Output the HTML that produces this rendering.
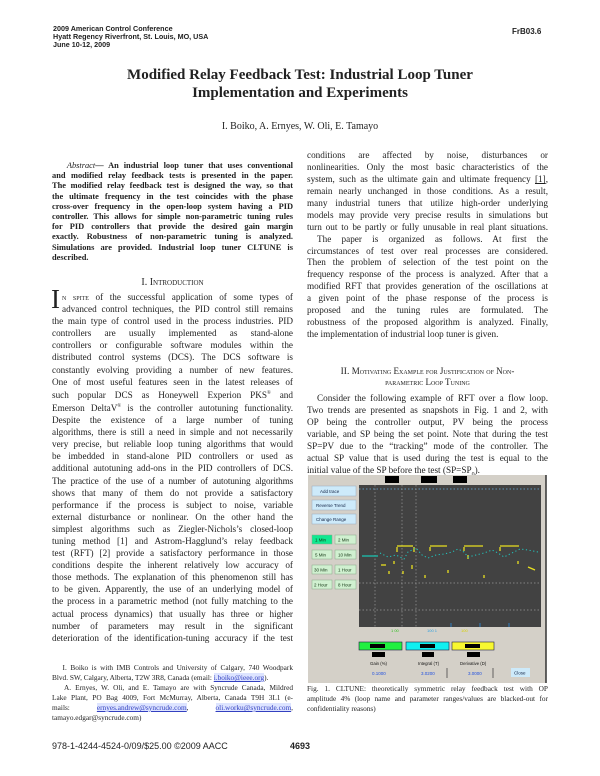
<!DOCTYPE html>
<html><head><meta charset="utf-8"><style>
*{margin:0;padding:0;box-sizing:border-box}
body{width:600px;height:776px;background:#fff;position:relative;overflow:hidden;font-family:"Liberation Serif",serif;color:#222}
.abs{position:absolute}
.hd{font-family:"Liberation Sans",sans-serif;font-weight:bold;font-size:7.2px;line-height:8px;color:#222}
.col{position:absolute;font-size:9.2px}
.col div{white-space:nowrap;text-align:justify;text-align-last:justify;overflow:visible}
.col div.l{text-align-last:left}
.ab{font-weight:bold;font-size:8.4px}
.fn{font-size:7.3px}
.lnk{color:#3340c0;text-decoration:underline;background:#dde4ff}
.sc{font-variant:small-caps}
</style></head><body>
<div class="abs hd" style="left:53px;top:25px">2009 American Control Conference<br>Hyatt Regency Riverfront, St. Louis, MO, USA<br>June 10-12, 2009</div>
<div class="abs hd" style="left:512px;top:28px;font-size:8px">FrB03.6</div>
<div class="abs" style="left:0;width:600px;top:66px;text-align:center;font-weight:bold;font-size:15px;line-height:18px;color:#222">Modified Relay Feedback Test: Industrial Loop Tuner<br>Implementation and Experiments</div>
<div class="abs" style="left:0;width:600px;top:121px;text-align:center;font-size:10px">I. Boiko, A. Ernyes, W. Oli, E. Tamayo</div>

<div class="col ab" style="left:52px;top:161px;width:241px;line-height:10.2px">
<div>&nbsp;&nbsp;&nbsp;<i style="font-weight:normal">Abstract</i>— An industrial loop tuner that uses conventional</div>
<div>and modified relay feedback tests is presented in the paper.</div>
<div>The modified relay feedback test is designed the way, so that</div>
<div>the ultimate frequency in the test coincides with the phase</div>
<div>cross-over frequency in the open-loop system having a PID</div>
<div>controller. This allows for simple non-parametric tuning rules</div>
<div>for PID controllers that provide the desired gain margin</div>
<div>exactly. Robustness of non-parametric tuning is analyzed.</div>
<div>Simulations are provided. Industrial loop tuner CLTUNE is</div>
<div class="l">described.</div>
</div>

<div class="abs" style="left:52px;width:241px;top:277px;text-align:center;font-size:10px">I. <span class="sc">Introduction</span></div>
<div class="abs" style="left:51px;top:284px;font-size:27px;line-height:30px">I</div>
<div class="col" style="left:52px;top:291px;width:241px;line-height:12.1px">
<div style="padding-left:10px"><span class="sc">n spite</span> of the successful application of some types of</div>
<div style="padding-left:10px">advanced control techniques, the PID control still remains</div>
<div>the main type of control used in the process industries. PID</div>
<div>controllers are usually implemented as stand-alone</div>
<div>controllers or configurable software modules within the</div>
<div>distributed control systems (DCS). The DCS software is</div>
<div>constantly evolving providing a number of new features.</div>
<div>One of most useful features seen in the latest releases of</div>
<div>such popular DCS as Honeywell Experion PKS<sup style="font-size:5px">®</sup> and</div>
<div>Emerson DeltaV<sup style="font-size:5px">®</sup> is the controller autotuning functionality.</div>
<div>Despite the existence of a large number of tuning</div>
<div>algorithms, there is still a need in simple and not necessarily</div>
<div>very precise, but reliable loop tuning algorithms that would</div>
<div>be imbedded in stand-alone PID controllers or used as</div>
<div>additional autotuning add-ons in the PID controllers of DCS.</div>
<div style="letter-spacing:-0.15px">The practice of the use of a number of autotuning algorithms</div>
<div>shows that many of them do not provide a satisfactory</div>
<div>performance if the process is subject to noise, variable</div>
<div>external disturbance or nonlinear. On the other hand the</div>
<div>simplest algorithms such as Ziegler-Nichols’s closed-loop</div>
<div>tuning method [1] and Astrom-Hagglund’s relay feedback</div>
<div>test (RFT) [2] provide a satisfactory performance in those</div>
<div>conditions despite the inherent relatively low accuracy of</div>
<div>those methods. The explanation of this phenomenon still has</div>
<div>to be given. Apparently, the use of an underlying model of</div>
<div>the process in a parametric method (not fully matching to the</div>
<div>actual process dynamics) that usually has three or higher</div>
<div>number of parameters may result in the significant</div>
<div>deterioration of the identification-tuning accuracy if the test</div>
</div>

<div class="col fn" style="left:52px;top:663px;width:241px;line-height:10px">
<div>&nbsp;&nbsp;&nbsp;I. Boiko is with IMB Controls and University of Calgary, 740 Woodpark</div>
<div class="l">Blvd. SW, Calgary, Alberta, T2W 3R8, Canada (email: <span class="lnk">i.boiko@ieee.org</span>).</div>
<div>&nbsp;&nbsp;&nbsp;A. Ernyes, W. Oli, and E. Tamayo are with Syncrude Canada, Mildred</div>
<div>Lake Plant, PO Bag 4009, Fort McMurray, Alberta, Canada T9H 3L1 (e-</div>
<div>mails: <span class="lnk">ernyes.andrew@syncrude.com</span>, <span class="lnk">oli.worku@syncrude.com</span>,</div>
<div class="l">tamayo.edgar@syncrude.com)</div>
</div>

<div class="col" style="left:307px;top:150px;width:241px;line-height:11.93px">
<div>conditions are affected by noise, disturbances or</div>
<div>nonlinearities. Only the most basic characteristics of the</div>
<div>system, such as the ultimate gain and ultimate frequency <span style="text-decoration:underline">[1]</span>,</div>
<div>remain nearly unchanged in those conditions. As a result,</div>
<div>many industrial tuners that utilize high-order underlying</div>
<div>models may provide very precise results in simulations but</div>
<div>turn out to be partly or fully unusable in real plant situations.</div>
<div style="padding-left:10px">The paper is organized as follows. At first the</div>
<div>circumstances of test over real processes are considered.</div>
<div>Then the problem of selection of the test point on the</div>
<div>frequency response of the process is analyzed. After that a</div>
<div>modified RFT that provides generation of the oscillations at</div>
<div>a given point of the phase response of the process is</div>
<div>proposed and the tuning rules are formulated. The</div>
<div>robustness of the proposed algorithm is analyzed. Finally,</div>
<div class="l">the implementation of industrial loop tuner is given.</div>
</div>

<div class="abs" style="left:307px;width:241px;top:366px;text-align:center;font-size:9.5px;line-height:10px">II. <span class="sc" style="font-size:9px">Motivating Example for Justification of Non-<br>parametric Loop Tuning</span></div>

<div class="col" style="left:307px;top:392px;width:241px;line-height:12.05px">
<div style="padding-left:10px">Consider the following example of RFT over a flow loop.</div>
<div>Two trends are presented as snapshots in Fig. 1 and 2, with</div>
<div>OP being the controller output, PV being the process</div>
<div>variable, and SP being the set point. Note that during the test</div>
<div>SP=PV due to the “tracking” mode of the controller. The</div>
<div>actual SP value that is used during the test is equal to the</div>
<div class="l">initial value of the SP before the test (SP=SP<sub style="font-size:6px">0</sub>).</div>
</div>

<svg class="abs" style="left:308px;top:475px" width="240" height="209" viewBox="0 0 240 209" font-family="Liberation Sans, sans-serif">
<rect x="0" y="0" width="238" height="208" fill="#d4d0c8"/>
<line x1="238" y1="0" x2="238" y2="208" stroke="#333" stroke-width="1.5"/>
<rect x="77" y="1" width="14" height="7" fill="#000"/><rect x="113" y="1" width="16" height="7" fill="#000"/><rect x="145" y="1" width="14" height="7" fill="#000"/>
<g fill="#cdeafa" stroke="#9ab" stroke-width="0.5">
<rect x="4" y="11" width="44" height="10"/><rect x="4" y="25" width="44" height="10"/><rect x="4" y="39" width="44" height="10"/></g>
<g font-size="4.5" fill="#124">
<text x="12" y="18">Add trace</text><text x="8" y="32">Reverse Trend</text><text x="8" y="46">Change Range</text></g>
<g stroke="#8a8" stroke-width="0.5" fill="#d0f0d0">
<rect x="4" y="60" width="20" height="9" fill="#10e890"/><rect x="27" y="60" width="21" height="9"/>
<rect x="4" y="75" width="20" height="9"/><rect x="27" y="75" width="21" height="9"/>
<rect x="4" y="90" width="20" height="9"/><rect x="27" y="90" width="21" height="9"/>
<rect x="4" y="105" width="20" height="9"/><rect x="27" y="105" width="21" height="9"/></g>
<g font-size="4.5" fill="#131">
<text x="7" y="66.5">1 Min</text><text x="30" y="66.5">2 Min</text>
<text x="7" y="81.5">5 Min</text><text x="30" y="81.5">10 Min</text>
<text x="6" y="96.5">30 Min</text><text x="30" y="96.5">1 Hour</text>
<text x="6" y="111.5">2 Hour</text><text x="30" y="111.5">8 Hour</text></g>
<rect x="51" y="10" width="182" height="142" fill="#424242"/>
<line x1="51" y1="14" x2="233" y2="14" stroke="#6ab0e0" stroke-width="0.8" stroke-dasharray="1.5 2"/>
<g stroke="#999" stroke-width="0.7" stroke-dasharray="1.5 2">
<line x1="51" y1="108" x2="233" y2="108"/><line x1="51" y1="135" x2="233" y2="135"/>
<line x1="67" y1="10" x2="67" y2="152"/><line x1="94" y1="10" x2="94" y2="152"/><line x1="108" y1="10" x2="108" y2="152"/></g>
<line x1="54" y1="81" x2="70" y2="81" stroke="#20b0a0" stroke-width="1.5"/>
<g stroke="#e8e020" stroke-width="1.3">
<line x1="89" y1="71" x2="105" y2="71"/><line x1="122" y1="71" x2="139" y2="71"/><line x1="156" y1="71" x2="175" y2="71"/><line x1="192" y1="71" x2="211" y2="71"/>
<line x1="73" y1="90" x2="78" y2="90"/><line x1="81" y1="96" x2="81" y2="99"/><line x1="89" y1="72" x2="89" y2="77"/><line x1="86" y1="86" x2="86" y2="89"/>
<line x1="95" y1="96" x2="95" y2="99"/><line x1="104" y1="90" x2="104" y2="94"/><line x1="106" y1="72" x2="106" y2="77"/><line x1="117" y1="100" x2="117" y2="103"/>
<line x1="122" y1="72" x2="122" y2="76"/><line x1="140" y1="95" x2="140" y2="98"/><line x1="156" y1="72" x2="156" y2="76"/><line x1="160" y1="80" x2="160" y2="84"/>
<line x1="176" y1="100" x2="176" y2="103"/><line x1="192" y1="72" x2="192" y2="76"/><line x1="210" y1="86" x2="210" y2="89"/><line x1="220" y1="92" x2="227" y2="95"/></g>
<polyline points="72,78 80,82 88,80 96,84 100,77 108,73 114,80 120,83 128,80 136,79 144,77 150,74 156,77 160,82 168,80 176,78 184,75 190,78 196,82 204,78 212,74 220,75 230,77" fill="none" stroke="#20c8c0" stroke-width="1" stroke-dasharray="1.2 2.5"/>
<g stroke="#2c8ce0" stroke-width="0.8"><line x1="143" y1="148" x2="143" y2="152"/><line x1="172" y1="148" x2="172" y2="152"/><line x1="201" y1="148" x2="201" y2="152"/></g>
<g font-size="4"><text x="83" y="157" fill="#30c020">1 00</text><text x="119" y="157" fill="#30a0e0">100 1</text><text x="153" y="157" fill="#d8d000">100</text></g>
<rect x="51" y="167" width="43" height="8" fill="#20f040" stroke="#224" stroke-width="0.6"/>
<rect x="98" y="167" width="43" height="8" fill="#10f0f0" stroke="#224" stroke-width="0.6"/>
<rect x="144" y="167" width="42" height="8" fill="#f8f830" stroke="#224" stroke-width="0.6"/>
<g fill="#000"><rect x="62" y="169" width="15" height="4"/><rect x="112" y="169" width="15" height="4"/><rect x="157" y="169" width="15" height="4"/>
<rect x="64" y="177" width="13" height="5"/><rect x="114" y="177" width="12" height="5"/><rect x="159" y="177" width="13" height="5"/></g>
<g font-size="4.3" fill="#111"><text x="62" y="190">Gain (%)</text><text x="110" y="190">Integral (T)</text><text x="152" y="190">Derivative (D)</text></g>
<g font-size="4.5" fill="#2050e0"><text x="64" y="200">0.1000</text><text x="113" y="200">3.0200</text><text x="160" y="200">3.0000</text></g>
<g stroke="#333" stroke-width="0.7"><line x1="139" y1="193" x2="139" y2="203"/><line x1="185" y1="193" x2="185" y2="203"/></g>
<rect x="203" y="193" width="19" height="9" fill="#cdeafa"/><text x="206" y="199.5" font-size="4.5" fill="#124">Close</text>
</svg>

<div class="col fn" style="left:307px;top:684px;width:241px;line-height:10px">
<div>Fig. 1. CLTUNE: theoretically symmetric relay feedback test with OP</div>
<div>amplitude 4% (loop name and parameter ranges/values are blacked-out for</div>
<div class="l">confidentiality reasons)</div>
</div>

<div class="abs" style="left:52px;top:741px;font-family:'Liberation Sans',sans-serif;font-size:9px">978-1-4244-4524-0/09/$25.00 ©2009 AACC</div>
<div class="abs" style="left:290px;top:741px;font-family:'Liberation Sans',sans-serif;font-size:9px;font-weight:bold">4693</div>
</body></html>
